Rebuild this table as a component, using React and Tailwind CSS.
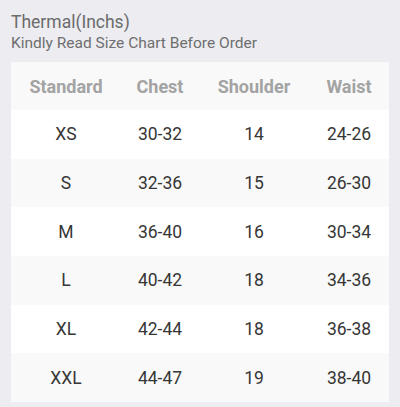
const rows = [
  ["XS", "30-32", "14", "24-26"],
  ["S", "32-36", "15", "26-30"],
  ["M", "36-40", "16", "30-34"],
  ["L", "40-42", "18", "34-36"],
  ["XL", "42-44", "18", "36-38"],
  ["XXL", "44-47", "19", "38-40"],
];

const cols = "grid grid-cols-[110px_78px_110px_80px]";

export default function App() {
  return (
    <div className="w-[400px] h-[407px] bg-[#ececf1] px-[11px] pt-[11px] font-['Roboto',sans-serif]">
      <div className="text-[17.5px] leading-[22px] text-[#6b6b6b]">Thermal(Inchs)</div>
      <div className="text-[15.5px] leading-[20px] text-[#6f6f6f]">Kindly Read Size Chart Before Order</div>
      <div className="mt-[9px] w-[378px]">
        <div className={`${cols} h-[48px] items-center bg-[#f9f9f9] text-[18px] font-bold text-[#a3a3a3]`}>
          <div className="text-center">Standard</div>
          <div className="text-center">Chest</div>
          <div className="text-center">Shoulder</div>
          <div className="text-center">Waist</div>
        </div>
        {rows.map((r, i) => (
          <div
            key={r[0]}
            className={`${cols} h-[48.7px] items-center text-[17.5px] text-[#363636] ${i % 2 === 0 ? "bg-white" : "bg-[#f9f9f9]"}`}
          >
            {r.map((c, j) => (
              <div key={j} className="text-center">{c}</div>
            ))}
          </div>
        ))}
      </div>
    </div>
  );
}
